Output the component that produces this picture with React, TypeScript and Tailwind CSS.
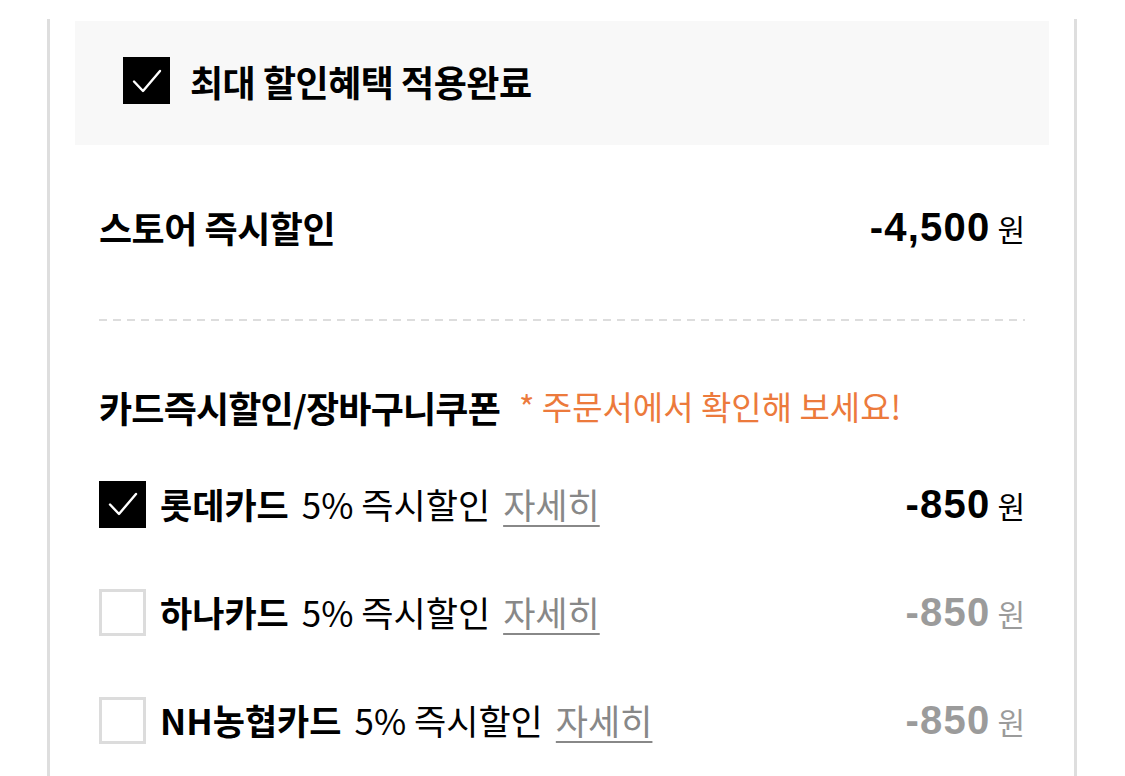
import React from "react";

const KR = "font-['Noto_Sans_CJK_KR',sans-serif]";
const NUM = "font-['Liberation_Sans',Arial,sans-serif]";

function Check({ on }: { on: boolean }) {
  if (on) {
    return (
      <span className="flex h-[47px] w-[47px] shrink-0 items-center justify-center bg-black">
        <svg width="36" height="36" viewBox="0 0 36 36" fill="none">
          <path d="M5 18.5 L14 28 L31 8" stroke="#fff" strokeWidth="2.4" strokeLinecap="round" strokeLinejoin="round" />
        </svg>
      </span>
    );
  }
  return <span className="h-[47px] w-[47px] shrink-0 border-[3px] border-[#dcdcdc] bg-white" />;
}

function Amount({ value, muted }: { value: string; muted?: boolean }) {
  return (
    <div className={`flex items-baseline gap-[7px] ${muted ? "text-[#9b9b9b]" : "text-black"}`}>
      <span className={`${NUM} text-[40px] font-bold tracking-[1.2px]`}>{value}</span>
      <span className={`${KR} text-[30px]`}>원</span>
    </div>
  );
}

const cards = [
  { name: "롯데카드", on: true },
  { name: "하나카드", on: false },
  { name: "NH농협카드", on: false },
];

export default function App() {
  return (
    <div className={`h-[776px] w-[1125px] overflow-hidden bg-white pl-[47px] pr-[48px] pt-[19px] ${KR}`}>
      <div className="h-full border-x-[3px] border-[#dedede] px-[25px] pt-[2px]">
        <div className="flex h-[124px] items-center gap-[20px] bg-[#f8f8f8] pb-[5px] pl-[48px]">
          <Check on />
          <span className="text-[36px] font-bold tracking-[-0.5px] text-black">최대 할인혜택 적용완료</span>
        </div>

        <div className="px-[24px]">
          <div className="mt-[42px] flex h-[80px] items-center justify-between">
            <span className="text-[36px] font-bold tracking-[-0.5px] text-black">스토어 즉시할인</span>
            <Amount value="-4,500" />
          </div>

          <div className="mt-[52px] h-[2px] bg-[repeating-linear-gradient(90deg,#dddddd_0_8px,transparent_8px_14px)]" />

          <div className="mt-[56px] flex h-[60px] items-center gap-[19px]">
            <span className="text-[36px] font-bold tracking-[-0.8px] text-black">카드즉시할인/장바구니쿠폰</span>
            <span className="text-[33px] text-[#ec7a3c]">* 주문서에서 확인해 보세요!</span>
          </div>

          <div className="mt-[13px] flex flex-col">
            {cards.map((c) => (
              <div key={c.name} className="flex h-[108px] items-center justify-between">
                <div className="flex items-center gap-[14px]">
                  <Check on={c.on} />
                  <div className="flex items-center gap-[13px] text-[35px] text-black">
                    <span className="font-bold">{c.name}</span>
                    <span>5% 즉시할인</span>
                    <span className="text-[#888888] underline decoration-[2px] underline-offset-[6px]">자세히</span>
                  </div>
                </div>
                <Amount value="-850" muted={!c.on} />
              </div>
            ))}
          </div>
        </div>
      </div>
    </div>
  );
}
